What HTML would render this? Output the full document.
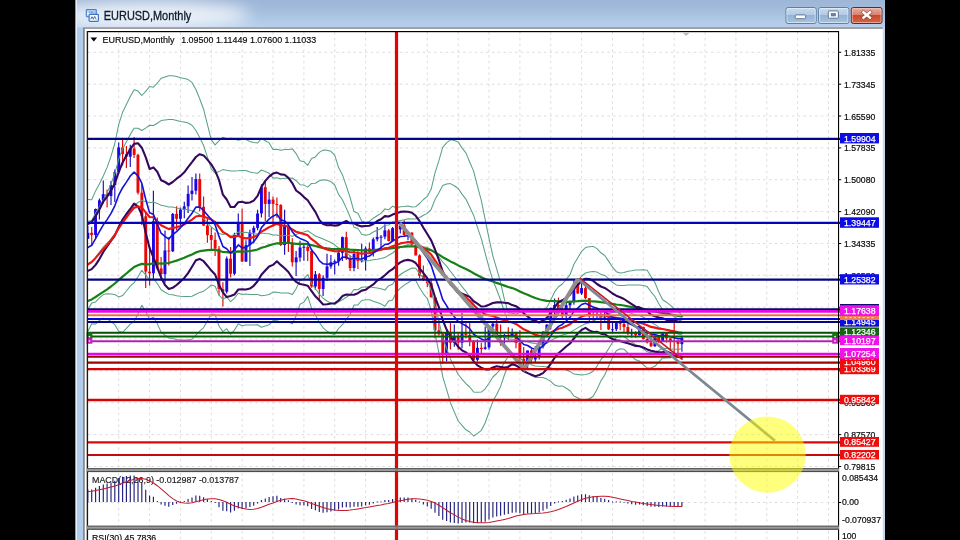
<!DOCTYPE html>
<html lang="en"><head><meta charset="utf-8"><title>EURUSD,Monthly</title>
<style>html,body{margin:0;padding:0;background:#000;width:960px;height:540px;overflow:hidden}</style></head>
<body>
<svg width="960" height="540" viewBox="0 0 960 540" style="position:absolute;left:0;top:0;will-change:transform;font-family:'Liberation Sans',sans-serif">
<defs>
<linearGradient id="tb" x1="0" y1="0" x2="0" y2="1"><stop offset="0" stop-color="#9db5d6"/><stop offset="0.4" stop-color="#a5bedd"/><stop offset="0.62" stop-color="#abc7e3"/><stop offset="1" stop-color="#b9d0ee"/></linearGradient>
<linearGradient id="bt" x1="0" y1="0" x2="0" y2="1"><stop offset="0" stop-color="#c9dbee"/><stop offset="0.45" stop-color="#b4cbe6"/><stop offset="0.5" stop-color="#95b3d6"/><stop offset="1" stop-color="#a7c3e2"/></linearGradient>
<linearGradient id="bc" x1="0" y1="0" x2="0" y2="1"><stop offset="0" stop-color="#eab0a2"/><stop offset="0.45" stop-color="#dc8270"/><stop offset="0.5" stop-color="#c9492c"/><stop offset="1" stop-color="#d4684a"/></linearGradient>
<clipPath id="cm"><rect x="88" y="32" width="750.5" height="437"/></clipPath>
<clipPath id="ct"><rect x="77" y="0" width="808" height="27.4"/></clipPath>
<clipPath id="cmacd"><rect x="88" y="472" width="750.5" height="55"/></clipPath>
<filter id="glow" x="-30%" y="-120%" width="160%" height="340%"><feGaussianBlur stdDeviation="8"/></filter>
<filter id="soft"><feGaussianBlur stdDeviation="0.35"/></filter>
</defs>
<rect x="0" y="0" width="960" height="540" fill="#000"/>
<rect x="75.5" y="0" width="809.5" height="27.5" fill="url(#tb)"/>
<rect x="75.5" y="27" width="809.5" height="513" fill="#b2ccec"/>
<rect x="75.6" y="0" width="1.3" height="540" fill="#eef4fb"/>
<ellipse cx="150" cy="15" rx="100" ry="13" fill="#ffffff" opacity="0.8" filter="url(#glow)" clip-path="url(#ct)"/>
<g>
<rect x="86.3" y="9.5" width="10" height="7.2" rx="0.8" fill="#a9c8ee" stroke="#4a80c8" stroke-width="1.1"/>
<rect x="87.3" y="11.6" width="2.6" height="4" fill="#f4f8fd"/>
<path d="M88.6 12.2h1.6M91.2 12.2h1.4" stroke="#3f6fb4" stroke-width="0.9"/>
<rect x="89.1" y="14.4" width="9.3" height="6.9" rx="0.8" fill="#f8fbfe" stroke="#3d74c4" stroke-width="1.2"/>
<path d="M90.8 19.3l1.2-2.6 1.3 2.5 1.4-2.8 1.5 3.1" fill="none" stroke="#3a557c" stroke-width="0.85"/>
</g>
<text x="103.8" y="20.3" font-size="12.2" fill="#0f1a2c" stroke="#0f1a2c" stroke-width="0.3" textLength="87.5" lengthAdjust="spacingAndGlyphs">EURUSD,Monthly</text>
<rect x="786" y="7.5" width="30.2" height="16" rx="2" fill="url(#bt)" stroke="#5f7fa6" stroke-width="1"/>
<rect x="787" y="8.5" width="28.2" height="14" rx="1.3" fill="none" stroke="#e8f1fa" stroke-width="0.9" opacity="0.75"/>
<rect x="818.6" y="7.5" width="30.3" height="16" rx="2" fill="url(#bt)" stroke="#5f7fa6" stroke-width="1"/>
<rect x="819.6" y="8.5" width="28.3" height="14" rx="1.3" fill="none" stroke="#e8f1fa" stroke-width="0.9" opacity="0.75"/>
<rect x="851.3" y="7.5" width="30.7" height="16" rx="2" fill="url(#bc)" stroke="#5e2a24" stroke-width="1"/>
<rect x="852.3" y="8.5" width="28.7" height="14" rx="1.3" fill="none" stroke="#f3c7bd" stroke-width="0.9" opacity="0.75"/>
<rect x="795.2" y="14.9" width="10.4" height="3.8" rx="1" fill="#fbfdff" stroke="#586b85" stroke-width="0.9"/>
<rect x="828.3" y="10.9" width="10" height="7.3" rx="0.8" fill="#fbfdff" stroke="#586b85" stroke-width="0.9"/>
<rect x="831.2" y="13.4" width="4.3" height="2.6" fill="#6f86a6" stroke="#55677f" stroke-width="0.6"/>
<path d="M863.4 12.3l6.6 5.4M870 12.3l-6.6 5.4" stroke="#5e3430" stroke-width="3.8" stroke-linecap="square" opacity="0.6"/>
<path d="M863.4 12.3l6.6 5.4M870 12.3l-6.6 5.4" stroke="#ffffff" stroke-width="2.4" stroke-linecap="square"/>
<rect x="83" y="27.4" width="800" height="513" fill="#8a8a8a"/>
<rect x="84.8" y="28.8" width="798.2" height="512" fill="#ffffff"/>
<g stroke="#d9d9d9" stroke-width="0.9" stroke-dasharray="2.6 3.17" fill="none">
<path d="M828.5 32V468"/>
<path d="M828.5 473V526"/>
<path d="M828.5 531V540"/>
<path d="M797.6 32V468"/>
<path d="M797.6 473V526"/>
<path d="M797.6 531V540"/>
<path d="M766.8 32V468"/>
<path d="M766.8 473V526"/>
<path d="M766.8 531V540"/>
<path d="M735.9 32V468"/>
<path d="M735.9 473V526"/>
<path d="M735.9 531V540"/>
<path d="M705.1 32V468"/>
<path d="M705.1 473V526"/>
<path d="M705.1 531V540"/>
<path d="M674.2 32V468"/>
<path d="M674.2 473V526"/>
<path d="M674.2 531V540"/>
<path d="M643.3 32V468"/>
<path d="M643.3 473V526"/>
<path d="M643.3 531V540"/>
<path d="M612.5 32V468"/>
<path d="M612.5 473V526"/>
<path d="M612.5 531V540"/>
<path d="M581.6 32V468"/>
<path d="M581.6 473V526"/>
<path d="M581.6 531V540"/>
<path d="M550.8 32V468"/>
<path d="M550.8 473V526"/>
<path d="M550.8 531V540"/>
<path d="M519.9 32V468"/>
<path d="M519.9 473V526"/>
<path d="M519.9 531V540"/>
<path d="M489 32V468"/>
<path d="M489 473V526"/>
<path d="M489 531V540"/>
<path d="M458.2 32V468"/>
<path d="M458.2 473V526"/>
<path d="M458.2 531V540"/>
<path d="M427.3 32V468"/>
<path d="M427.3 473V526"/>
<path d="M427.3 531V540"/>
<path d="M396.5 32V468"/>
<path d="M396.5 473V526"/>
<path d="M396.5 531V540"/>
<path d="M365.6 32V468"/>
<path d="M365.6 473V526"/>
<path d="M365.6 531V540"/>
<path d="M334.7 32V468"/>
<path d="M334.7 473V526"/>
<path d="M334.7 531V540"/>
<path d="M303.9 32V468"/>
<path d="M303.9 473V526"/>
<path d="M303.9 531V540"/>
<path d="M273 32V468"/>
<path d="M273 473V526"/>
<path d="M273 531V540"/>
<path d="M242.2 32V468"/>
<path d="M242.2 473V526"/>
<path d="M242.2 531V540"/>
<path d="M211.3 32V468"/>
<path d="M211.3 473V526"/>
<path d="M211.3 531V540"/>
<path d="M180.4 32V468"/>
<path d="M180.4 473V526"/>
<path d="M180.4 531V540"/>
<path d="M149.6 32V468"/>
<path d="M149.6 473V526"/>
<path d="M149.6 531V540"/>
<path d="M118.7 32V468"/>
<path d="M118.7 473V526"/>
<path d="M118.7 531V540"/>
<path d="M88 52.3H838"/>
<path d="M88 84.2H838"/>
<path d="M88 116H838"/>
<path d="M88 147.9H838"/>
<path d="M88 179.7H838"/>
<path d="M88 211.6H838"/>
<path d="M88 243.5H838"/>
<path d="M88 275.3H838"/>
<path d="M88 307.2H838"/>
<path d="M88 339H838"/>
<path d="M88 370.9H838"/>
<path d="M88 402.8H838"/>
<path d="M88 434.6H838"/>
<path d="M88 466.5H838"/>
<path d="M88 502.5H838"/>
</g>
<g clip-path="url(#cm)">
<path d="M87.8 226V239.1" stroke="#1a0cc0" stroke-width="1.15"/>
<rect x="86.4" y="232.8" width="2.9" height="5.9" fill="#1c06e6"/>
<path d="M91.7 226.9V246" stroke="#dc0808" stroke-width="1.15"/>
<rect x="90.2" y="232.8" width="2.9" height="2.2" fill="#ec0606"/>
<path d="M95.6 208.6V238.3" stroke="#1a0cc0" stroke-width="1.15"/>
<rect x="94.1" y="209" width="2.9" height="26" fill="#1c06e6"/>
<path d="M99.4 198.4V219.6" stroke="#1a0cc0" stroke-width="1.15"/>
<rect x="98" y="200.3" width="2.9" height="8.7" fill="#1c06e6"/>
<path d="M103.3 180.6V203.5" stroke="#1a0cc0" stroke-width="1.15"/>
<rect x="101.8" y="194.2" width="2.9" height="6.1" fill="#1c06e6"/>
<path d="M107.1 189.5V207.4" stroke="#dc0808" stroke-width="1.15"/>
<rect x="105.7" y="194.2" width="2.9" height="1.8" fill="#ec0606"/>
<path d="M111 181.1V205.1" stroke="#1a0cc0" stroke-width="1.15"/>
<rect x="109.5" y="185" width="2.9" height="11" fill="#1c06e6"/>
<path d="M114.8 169.5V202.1" stroke="#1a0cc0" stroke-width="1.15"/>
<rect x="113.4" y="172" width="2.9" height="13" fill="#1c06e6"/>
<path d="M118.7 142.5V173.6" stroke="#1a0cc0" stroke-width="1.15"/>
<rect x="117.2" y="147.4" width="2.9" height="24.6" fill="#1c06e6"/>
<path d="M122.6 137.8V165.5" stroke="#dc0808" stroke-width="1.15"/>
<rect x="121.1" y="147.4" width="2.9" height="6.7" fill="#ec0606"/>
<path d="M126.4 145.9V167.9" stroke="#dc0808" stroke-width="1.15"/>
<rect x="125" y="154.1" width="2.9" height="2.6" fill="#ec0606"/>
<path d="M130.3 144.7V167.1" stroke="#1a0cc0" stroke-width="1.15"/>
<rect x="128.8" y="148.6" width="2.9" height="8.1" fill="#1c06e6"/>
<path d="M134.1 137.1V157.9" stroke="#dc0808" stroke-width="1.15"/>
<rect x="132.7" y="148.6" width="2.9" height="6.3" fill="#ec0606"/>
<path d="M138 153.7V194.4" stroke="#dc0808" stroke-width="1.15"/>
<rect x="136.5" y="154.9" width="2.9" height="37.8" fill="#ec0606"/>
<path d="M141.8 184.6V224.9" stroke="#dc0808" stroke-width="1.15"/>
<rect x="140.4" y="192.7" width="2.9" height="23.6" fill="#ec0606"/>
<path d="M145.7 212.7V287.9" stroke="#dc0808" stroke-width="1.15"/>
<rect x="144.3" y="216.3" width="2.9" height="55.3" fill="#ec0606"/>
<path d="M149.6 248.5V285.5" stroke="#dc0808" stroke-width="1.15"/>
<rect x="148.1" y="271.7" width="2.9" height="1.6" fill="#ec0606"/>
<path d="M153.4 190.7V279" stroke="#1a0cc0" stroke-width="1.15"/>
<rect x="152" y="221.2" width="2.9" height="52.1" fill="#1c06e6"/>
<path d="M157.3 217.5V270.2" stroke="#dc0808" stroke-width="1.15"/>
<rect x="155.8" y="221.2" width="2.9" height="47.2" fill="#ec0606"/>
<path d="M161.1 257V280.4" stroke="#dc0808" stroke-width="1.15"/>
<rect x="159.7" y="268.4" width="2.9" height="5.7" fill="#ec0606"/>
<path d="M165 230.6V282.8" stroke="#1a0cc0" stroke-width="1.15"/>
<rect x="163.5" y="250.5" width="2.9" height="23.6" fill="#1c06e6"/>
<path d="M168.8 236.9V265.4" stroke="#dc0808" stroke-width="1.15"/>
<rect x="167.4" y="250.5" width="2.9" height="1" fill="#ec0606"/>
<path d="M172.7 213.1V252.1" stroke="#1a0cc0" stroke-width="1.15"/>
<rect x="171.3" y="213.9" width="2.9" height="37.4" fill="#1c06e6"/>
<path d="M176.6 206.2V230.2" stroke="#dc0808" stroke-width="1.15"/>
<rect x="175.1" y="213.9" width="2.9" height="4.9" fill="#ec0606"/>
<path d="M180.4 207.6V226.9" stroke="#1a0cc0" stroke-width="1.15"/>
<rect x="179" y="209.6" width="2.9" height="9.2" fill="#1c06e6"/>
<path d="M184.3 201.7V218.2" stroke="#1a0cc0" stroke-width="1.15"/>
<rect x="182.8" y="206.4" width="2.9" height="3.3" fill="#1c06e6"/>
<path d="M188.1 185.6V212.9" stroke="#1a0cc0" stroke-width="1.15"/>
<rect x="186.7" y="193.9" width="2.9" height="12.4" fill="#1c06e6"/>
<path d="M192 176.9V200.5" stroke="#1a0cc0" stroke-width="1.15"/>
<rect x="190.5" y="190.7" width="2.9" height="3.3" fill="#1c06e6"/>
<path d="M195.9 173.4V194.6" stroke="#1a0cc0" stroke-width="1.15"/>
<rect x="194.4" y="179.1" width="2.9" height="11.6" fill="#1c06e6"/>
<path d="M199.7 173.6V211.2" stroke="#dc0808" stroke-width="1.15"/>
<rect x="198.3" y="179.1" width="2.9" height="27.7" fill="#ec0606"/>
<path d="M203.6 196.4V226.1" stroke="#dc0808" stroke-width="1.15"/>
<rect x="202.1" y="206.8" width="2.9" height="18.7" fill="#ec0606"/>
<path d="M207.4 218.8V242.8" stroke="#dc0808" stroke-width="1.15"/>
<rect x="206" y="225.5" width="2.9" height="9.6" fill="#ec0606"/>
<path d="M211.3 227.3V249.9" stroke="#dc0808" stroke-width="1.15"/>
<rect x="209.8" y="235" width="2.9" height="4.9" fill="#ec0606"/>
<path d="M215.1 232.6V256" stroke="#dc0808" stroke-width="1.15"/>
<rect x="213.7" y="239.9" width="2.9" height="8.7" fill="#ec0606"/>
<path d="M219 246V295.5" stroke="#dc0808" stroke-width="1.15"/>
<rect x="217.5" y="248.7" width="2.9" height="40.3" fill="#ec0606"/>
<path d="M222.9 282.2V306.4" stroke="#dc0808" stroke-width="1.15"/>
<rect x="221.4" y="289" width="2.9" height="2.8" fill="#ec0606"/>
<path d="M226.7 256.4V293.6" stroke="#1a0cc0" stroke-width="1.15"/>
<rect x="225.3" y="258.6" width="2.9" height="33.2" fill="#1c06e6"/>
<path d="M230.6 247V277.6" stroke="#dc0808" stroke-width="1.15"/>
<rect x="229.1" y="258.6" width="2.9" height="15.1" fill="#ec0606"/>
<path d="M234.4 232.8V275.3" stroke="#1a0cc0" stroke-width="1.15"/>
<rect x="233" y="235" width="2.9" height="38.7" fill="#1c06e6"/>
<path d="M238.3 213.5V234.8" stroke="#1a0cc0" stroke-width="1.15"/>
<rect x="236.8" y="222.2" width="2.9" height="12.8" fill="#1c06e6"/>
<path d="M242.1 208.5V262.1" stroke="#dc0808" stroke-width="1.15"/>
<rect x="240.7" y="222.2" width="2.9" height="39.3" fill="#ec0606"/>
<path d="M246 240.3V261.9" stroke="#1a0cc0" stroke-width="1.15"/>
<rect x="244.5" y="245.2" width="2.9" height="16.3" fill="#1c06e6"/>
<path d="M249.9 229.8V266" stroke="#1a0cc0" stroke-width="1.15"/>
<rect x="248.4" y="232.6" width="2.9" height="12.6" fill="#1c06e6"/>
<path d="M253.7 225.7V243.4" stroke="#1a0cc0" stroke-width="1.15"/>
<rect x="252.3" y="227.9" width="2.9" height="4.7" fill="#1c06e6"/>
<path d="M257.6 209.8V230.2" stroke="#1a0cc0" stroke-width="1.15"/>
<rect x="256.1" y="213.5" width="2.9" height="14.4" fill="#1c06e6"/>
<path d="M261.4 184.2V217.5" stroke="#1a0cc0" stroke-width="1.15"/>
<rect x="260" y="187.2" width="2.9" height="26.2" fill="#1c06e6"/>
<path d="M265.3 181.7V221.2" stroke="#dc0808" stroke-width="1.15"/>
<rect x="263.8" y="187.2" width="2.9" height="16.7" fill="#ec0606"/>
<path d="M269.1 191.7V217.1" stroke="#1a0cc0" stroke-width="1.15"/>
<rect x="267.7" y="199.6" width="2.9" height="4.3" fill="#1c06e6"/>
<path d="M273 196.4V226.7" stroke="#dc0808" stroke-width="1.15"/>
<rect x="271.6" y="199.6" width="2.9" height="4.3" fill="#ec0606"/>
<path d="M276.9 197.6V217.8" stroke="#dc0808" stroke-width="1.15"/>
<rect x="275.4" y="203.9" width="2.9" height="1" fill="#ec0606"/>
<path d="M280.7 204.3V246" stroke="#dc0808" stroke-width="1.15"/>
<rect x="279.3" y="204.9" width="2.9" height="40.1" fill="#ec0606"/>
<path d="M284.6 209.8V254.8" stroke="#1a0cc0" stroke-width="1.15"/>
<rect x="283.1" y="225.9" width="2.9" height="19.1" fill="#1c06e6"/>
<path d="M288.4 225.3V252.1" stroke="#dc0808" stroke-width="1.15"/>
<rect x="287" y="225.9" width="2.9" height="16.7" fill="#ec0606"/>
<path d="M292.3 238.3V266.4" stroke="#dc0808" stroke-width="1.15"/>
<rect x="290.8" y="242.6" width="2.9" height="19.7" fill="#ec0606"/>
<path d="M296.1 251.1V275.9" stroke="#1a0cc0" stroke-width="1.15"/>
<rect x="294.7" y="257.4" width="2.9" height="4.9" fill="#1c06e6"/>
<path d="M300 240.7V261.7" stroke="#1a0cc0" stroke-width="1.15"/>
<rect x="298.6" y="247.5" width="2.9" height="10" fill="#1c06e6"/>
<path d="M303.9 245V260.7" stroke="#1a0cc0" stroke-width="1.15"/>
<rect x="302.4" y="246.8" width="2.9" height="1" fill="#1c06e6"/>
<path d="M307.7 245.2V260.9" stroke="#dc0808" stroke-width="1.15"/>
<rect x="306.3" y="246.8" width="2.9" height="4.1" fill="#ec0606"/>
<path d="M311.6 249.1V287.7" stroke="#dc0808" stroke-width="1.15"/>
<rect x="310.1" y="250.9" width="2.9" height="35.6" fill="#ec0606"/>
<path d="M315.4 270.9V289.8" stroke="#1a0cc0" stroke-width="1.15"/>
<rect x="314" y="274.3" width="2.9" height="12.2" fill="#1c06e6"/>
<path d="M319.3 273.1V299.7" stroke="#dc0808" stroke-width="1.15"/>
<rect x="317.8" y="274.3" width="2.9" height="14.6" fill="#ec0606"/>
<path d="M323.1 275.3V296.1" stroke="#1a0cc0" stroke-width="1.15"/>
<rect x="321.7" y="277.8" width="2.9" height="11.2" fill="#1c06e6"/>
<path d="M327 253.8V281" stroke="#1a0cc0" stroke-width="1.15"/>
<rect x="325.6" y="266.4" width="2.9" height="11.4" fill="#1c06e6"/>
<path d="M330.9 255V268.8" stroke="#1a0cc0" stroke-width="1.15"/>
<rect x="329.4" y="262.3" width="2.9" height="4.1" fill="#1c06e6"/>
<path d="M334.7 259.5V274.5" stroke="#1a0cc0" stroke-width="1.15"/>
<rect x="333.3" y="261.3" width="2.9" height="1" fill="#1c06e6"/>
<path d="M338.6 248.1V265.8" stroke="#1a0cc0" stroke-width="1.15"/>
<rect x="337.1" y="252.7" width="2.9" height="8.5" fill="#1c06e6"/>
<path d="M342.4 236.5V260.9" stroke="#1a0cc0" stroke-width="1.15"/>
<rect x="341" y="237.1" width="2.9" height="15.7" fill="#1c06e6"/>
<path d="M346.3 231.8V260.1" stroke="#dc0808" stroke-width="1.15"/>
<rect x="344.8" y="237.1" width="2.9" height="21.4" fill="#ec0606"/>
<path d="M350.1 255.2V270.9" stroke="#dc0808" stroke-width="1.15"/>
<rect x="348.7" y="258.4" width="2.9" height="9.6" fill="#ec0606"/>
<path d="M354 250.7V271.3" stroke="#1a0cc0" stroke-width="1.15"/>
<rect x="352.6" y="254" width="2.9" height="14" fill="#1c06e6"/>
<path d="M357.9 250.7V269" stroke="#dc0808" stroke-width="1.15"/>
<rect x="356.4" y="254" width="2.9" height="6.9" fill="#ec0606"/>
<path d="M361.7 243.8V262.5" stroke="#1a0cc0" stroke-width="1.15"/>
<rect x="360.3" y="260.3" width="2.9" height="1" fill="#1c06e6"/>
<path d="M365.6 246.6V270.6" stroke="#1a0cc0" stroke-width="1.15"/>
<rect x="364.1" y="248.5" width="2.9" height="11.8" fill="#1c06e6"/>
<path d="M369.4 242.4V253.6" stroke="#dc0808" stroke-width="1.15"/>
<rect x="368" y="248.5" width="2.9" height="3.3" fill="#ec0606"/>
<path d="M373.3 237.5V256.4" stroke="#1a0cc0" stroke-width="1.15"/>
<rect x="371.8" y="239.3" width="2.9" height="12.4" fill="#1c06e6"/>
<path d="M377.2 226.9V241.6" stroke="#1a0cc0" stroke-width="1.15"/>
<rect x="375.7" y="236.9" width="2.9" height="2.4" fill="#1c06e6"/>
<path d="M381 235V248.7" stroke="#1a0cc0" stroke-width="1.15"/>
<rect x="379.6" y="236.7" width="2.9" height="1" fill="#1c06e6"/>
<path d="M384.9 224.3V239.3" stroke="#1a0cc0" stroke-width="1.15"/>
<rect x="383.4" y="230.4" width="2.9" height="6.3" fill="#1c06e6"/>
<path d="M388.7 229.1V241.4" stroke="#dc0808" stroke-width="1.15"/>
<rect x="387.3" y="230.4" width="2.9" height="10.6" fill="#ec0606"/>
<path d="M392.6 227.1V241.4" stroke="#1a0cc0" stroke-width="1.15"/>
<rect x="391.1" y="228.1" width="2.9" height="12.8" fill="#1c06e6"/>
<path d="M396.4 221.4V232" stroke="#dc0808" stroke-width="1.15"/>
<rect x="395" y="228.1" width="2.9" height="1.2" fill="#ec0606"/>
<path d="M400.3 223.9V233.4" stroke="#1a0cc0" stroke-width="1.15"/>
<rect x="398.8" y="225.5" width="2.9" height="3.9" fill="#1c06e6"/>
<path d="M404.2 220.3V236.9" stroke="#dc0808" stroke-width="1.15"/>
<rect x="402.7" y="225.5" width="2.9" height="9.4" fill="#ec0606"/>
<path d="M408 232.2V240.3" stroke="#1a0cc0" stroke-width="1.15"/>
<rect x="406.6" y="232.6" width="2.9" height="2.2" fill="#1c06e6"/>
<path d="M411.9 232.2V245.8" stroke="#dc0808" stroke-width="1.15"/>
<rect x="410.4" y="232.6" width="2.9" height="12.2" fill="#ec0606"/>
<path d="M415.7 242.6V255.4" stroke="#dc0808" stroke-width="1.15"/>
<rect x="414.3" y="244.8" width="2.9" height="10.6" fill="#ec0606"/>
<path d="M419.6 254.2V278.2" stroke="#dc0808" stroke-width="1.15"/>
<rect x="418.1" y="255.4" width="2.9" height="20.3" fill="#ec0606"/>
<path d="M423.4 265.4V281" stroke="#dc0808" stroke-width="1.15"/>
<rect x="422" y="275.7" width="2.9" height="4.3" fill="#ec0606"/>
<path d="M427.3 277V286.9" stroke="#dc0808" stroke-width="1.15"/>
<rect x="425.9" y="280" width="2.9" height="3.1" fill="#ec0606"/>
<path d="M431.2 278.2V297.5" stroke="#dc0808" stroke-width="1.15"/>
<rect x="429.7" y="283.1" width="2.9" height="14.2" fill="#ec0606"/>
<path d="M435 296.9V338.2" stroke="#dc0808" stroke-width="1.15"/>
<rect x="433.6" y="297.3" width="2.9" height="33" fill="#ec0606"/>
<path d="M438.9 320.3V335.5" stroke="#dc0808" stroke-width="1.15"/>
<rect x="437.4" y="330.3" width="2.9" height="3.9" fill="#ec0606"/>
<path d="M442.7 332.3V364" stroke="#dc0808" stroke-width="1.15"/>
<rect x="441.3" y="334.1" width="2.9" height="18.9" fill="#ec0606"/>
<path d="M446.6 331.3V361.6" stroke="#1a0cc0" stroke-width="1.15"/>
<rect x="445.1" y="332.9" width="2.9" height="20.1" fill="#1c06e6"/>
<path d="M450.4 323.1V349.4" stroke="#dc0808" stroke-width="1.15"/>
<rect x="449" y="332.9" width="2.9" height="9.8" fill="#ec0606"/>
<path d="M454.3 324.4V346.7" stroke="#1a0cc0" stroke-width="1.15"/>
<rect x="452.9" y="336.2" width="2.9" height="6.5" fill="#1c06e6"/>
<path d="M458.2 333.3V349.8" stroke="#dc0808" stroke-width="1.15"/>
<rect x="456.7" y="336.2" width="2.9" height="6.5" fill="#ec0606"/>
<path d="M462 313V348.2" stroke="#1a0cc0" stroke-width="1.15"/>
<rect x="460.6" y="333.5" width="2.9" height="9.2" fill="#1c06e6"/>
<path d="M465.9 323.3V338.6" stroke="#dc0808" stroke-width="1.15"/>
<rect x="464.4" y="333.5" width="2.9" height="1.4" fill="#ec0606"/>
<path d="M469.7 321.9V346.3" stroke="#dc0808" stroke-width="1.15"/>
<rect x="468.3" y="334.9" width="2.9" height="6.9" fill="#ec0606"/>
<path d="M473.6 340V360.2" stroke="#dc0808" stroke-width="1.15"/>
<rect x="472.1" y="341.9" width="2.9" height="17.9" fill="#ec0606"/>
<path d="M477.4 339.6V361.6" stroke="#1a0cc0" stroke-width="1.15"/>
<rect x="476" y="347.8" width="2.9" height="12" fill="#1c06e6"/>
<path d="M481.3 342.7V353.9" stroke="#dc0808" stroke-width="1.15"/>
<rect x="479.9" y="347.8" width="2.9" height="1.2" fill="#ec0606"/>
<path d="M485.2 326.8V349.8" stroke="#1a0cc0" stroke-width="1.15"/>
<rect x="483.7" y="347.3" width="2.9" height="1.6" fill="#1c06e6"/>
<path d="M489 325.4V349.4" stroke="#1a0cc0" stroke-width="1.15"/>
<rect x="487.6" y="326.6" width="2.9" height="20.8" fill="#1c06e6"/>
<path d="M492.9 323.1V333.3" stroke="#1a0cc0" stroke-width="1.15"/>
<rect x="491.4" y="323.7" width="2.9" height="2.8" fill="#1c06e6"/>
<path d="M496.7 317V338" stroke="#dc0808" stroke-width="1.15"/>
<rect x="495.3" y="323.7" width="2.9" height="13" fill="#ec0606"/>
<path d="M500.6 324.6V345.7" stroke="#dc0808" stroke-width="1.15"/>
<rect x="499.1" y="336.8" width="2.9" height="1" fill="#ec0606"/>
<path d="M504.4 333.9V344.1" stroke="#1a0cc0" stroke-width="1.15"/>
<rect x="503" y="334.9" width="2.9" height="2.8" fill="#1c06e6"/>
<path d="M508.3 327.2V340.2" stroke="#dc0808" stroke-width="1.15"/>
<rect x="506.9" y="334.9" width="2.9" height="1" fill="#ec0606"/>
<path d="M512.2 328.6V337.2" stroke="#1a0cc0" stroke-width="1.15"/>
<rect x="510.7" y="332.3" width="2.9" height="3.5" fill="#1c06e6"/>
<path d="M516 331.9V348.2" stroke="#dc0808" stroke-width="1.15"/>
<rect x="514.6" y="332.3" width="2.9" height="10.6" fill="#ec0606"/>
<path d="M519.9 329.9V361.6" stroke="#dc0808" stroke-width="1.15"/>
<rect x="518.4" y="342.9" width="2.9" height="15.9" fill="#ec0606"/>
<path d="M523.7 347.1V368.5" stroke="#dc0808" stroke-width="1.15"/>
<rect x="522.3" y="358.7" width="2.9" height="3.1" fill="#ec0606"/>
<path d="M527.6 351.2V368.9" stroke="#1a0cc0" stroke-width="1.15"/>
<rect x="526.1" y="350.4" width="2.9" height="11.4" fill="#1c06e6"/>
<path d="M531.5 349V362.6" stroke="#dc0808" stroke-width="1.15"/>
<rect x="530" y="350.4" width="2.9" height="9" fill="#ec0606"/>
<path d="M535.3 345.9V362.6" stroke="#1a0cc0" stroke-width="1.15"/>
<rect x="533.9" y="356.3" width="2.9" height="3.1" fill="#1c06e6"/>
<path d="M539.2 344.1V359.6" stroke="#1a0cc0" stroke-width="1.15"/>
<rect x="537.7" y="346.3" width="2.9" height="10" fill="#1c06e6"/>
<path d="M543 331.1V348.6" stroke="#1a0cc0" stroke-width="1.15"/>
<rect x="541.6" y="332.3" width="2.9" height="14" fill="#1c06e6"/>
<path d="M546.9 324V337.2" stroke="#1a0cc0" stroke-width="1.15"/>
<rect x="545.4" y="324.8" width="2.9" height="7.5" fill="#1c06e6"/>
<path d="M550.7 307.7V329.4" stroke="#1a0cc0" stroke-width="1.15"/>
<rect x="549.3" y="307.9" width="2.9" height="16.9" fill="#1c06e6"/>
<path d="M554.6 298.5V315.2" stroke="#1a0cc0" stroke-width="1.15"/>
<rect x="553.1" y="305" width="2.9" height="2.8" fill="#1c06e6"/>
<path d="M558.5 297.6V313" stroke="#dc0808" stroke-width="1.15"/>
<rect x="557" y="305" width="2.9" height="3.9" fill="#ec0606"/>
<path d="M562.3 306.3V318.7" stroke="#dc0808" stroke-width="1.15"/>
<rect x="560.9" y="308.9" width="2.9" height="6.9" fill="#ec0606"/>
<path d="M566.2 303V319.5" stroke="#1a0cc0" stroke-width="1.15"/>
<rect x="564.7" y="305.2" width="2.9" height="10.6" fill="#1c06e6"/>
<path d="M570 300.4V312.8" stroke="#1a0cc0" stroke-width="1.15"/>
<rect x="568.6" y="301.4" width="2.9" height="3.9" fill="#1c06e6"/>
<path d="M573.9 279.5V304.8" stroke="#1a0cc0" stroke-width="1.15"/>
<rect x="572.4" y="284.5" width="2.9" height="16.9" fill="#1c06e6"/>
<path d="M577.7 278.8V293.8" stroke="#dc0808" stroke-width="1.15"/>
<rect x="576.3" y="284.5" width="2.9" height="9" fill="#ec0606"/>
<path d="M581.6 282V295.1" stroke="#1a0cc0" stroke-width="1.15"/>
<rect x="580.1" y="288.1" width="2.9" height="5.3" fill="#1c06e6"/>
<path d="M585.5 284.5V299.1" stroke="#dc0808" stroke-width="1.15"/>
<rect x="584" y="288.1" width="2.9" height="10" fill="#ec0606"/>
<path d="M589.3 297.9V321.3" stroke="#dc0808" stroke-width="1.15"/>
<rect x="587.9" y="298.1" width="2.9" height="15.9" fill="#ec0606"/>
<path d="M593.2 307.5V321.3" stroke="#dc0808" stroke-width="1.15"/>
<rect x="591.7" y="314" width="2.9" height="1" fill="#ec0606"/>
<path d="M597 309.9V318.7" stroke="#1a0cc0" stroke-width="1.15"/>
<rect x="595.6" y="314" width="2.9" height="1" fill="#1c06e6"/>
<path d="M600.9 312.2V329.9" stroke="#dc0808" stroke-width="1.15"/>
<rect x="599.4" y="314" width="2.9" height="3.7" fill="#ec0606"/>
<path d="M604.7 308.9V320.7" stroke="#1a0cc0" stroke-width="1.15"/>
<rect x="603.3" y="317.4" width="2.9" height="1" fill="#1c06e6"/>
<path d="M608.6 316.6V329.9" stroke="#dc0808" stroke-width="1.15"/>
<rect x="607.2" y="317.4" width="2.9" height="12" fill="#ec0606"/>
<path d="M612.5 321.7V333.3" stroke="#1a0cc0" stroke-width="1.15"/>
<rect x="611" y="329.2" width="2.9" height="1" fill="#1c06e6"/>
<path d="M616.3 322.3V331.1" stroke="#1a0cc0" stroke-width="1.15"/>
<rect x="614.9" y="323.1" width="2.9" height="6.1" fill="#1c06e6"/>
<path d="M620.2 318.9V330.3" stroke="#dc0808" stroke-width="1.15"/>
<rect x="618.7" y="323.1" width="2.9" height="1" fill="#ec0606"/>
<path d="M624 322.1V332.5" stroke="#dc0808" stroke-width="1.15"/>
<rect x="622.6" y="324" width="2.9" height="3.1" fill="#ec0606"/>
<path d="M627.9 323.7V334.9" stroke="#dc0808" stroke-width="1.15"/>
<rect x="626.4" y="327" width="2.9" height="6.3" fill="#ec0606"/>
<path d="M631.7 328.8V337.6" stroke="#1a0cc0" stroke-width="1.15"/>
<rect x="630.3" y="333.3" width="2.9" height="1" fill="#1c06e6"/>
<path d="M635.6 331.3V337.8" stroke="#dc0808" stroke-width="1.15"/>
<rect x="634.2" y="333.3" width="2.9" height="1.8" fill="#ec0606"/>
<path d="M639.5 325.4V335.5" stroke="#1a0cc0" stroke-width="1.15"/>
<rect x="638" y="327" width="2.9" height="8.1" fill="#1c06e6"/>
<path d="M643.3 326.8V339.6" stroke="#dc0808" stroke-width="1.15"/>
<rect x="641.9" y="327" width="2.9" height="12" fill="#ec0606"/>
<path d="M647.2 331.9V343.5" stroke="#dc0808" stroke-width="1.15"/>
<rect x="645.7" y="339" width="2.9" height="3.5" fill="#ec0606"/>
<path d="M651 337.6V346.9" stroke="#dc0808" stroke-width="1.15"/>
<rect x="649.6" y="342.5" width="2.9" height="3.7" fill="#ec0606"/>
<path d="M654.9 334.7V346.9" stroke="#1a0cc0" stroke-width="1.15"/>
<rect x="653.4" y="336" width="2.9" height="10.2" fill="#1c06e6"/>
<path d="M658.8 334.9V342.9" stroke="#dc0808" stroke-width="1.15"/>
<rect x="657.3" y="336" width="2.9" height="5.5" fill="#ec0606"/>
<path d="M662.6 332.3V342.1" stroke="#1a0cc0" stroke-width="1.15"/>
<rect x="661.2" y="333.5" width="2.9" height="7.9" fill="#1c06e6"/>
<path d="M666.5 332.9V342.5" stroke="#dc0808" stroke-width="1.15"/>
<rect x="665" y="333.5" width="2.9" height="4.9" fill="#ec0606"/>
<path d="M670.3 338.2V351" stroke="#dc0808" stroke-width="1.15"/>
<rect x="668.9" y="338.4" width="2.9" height="2.6" fill="#ec0606"/>
<path d="M674.2 321.9V356.9" stroke="#dc0808" stroke-width="1.15"/>
<rect x="672.7" y="341" width="2.9" height="1" fill="#ec0606"/>
<path d="M678 340.4V353.2" stroke="#dc0808" stroke-width="1.15"/>
<rect x="676.6" y="340.8" width="2.9" height="3.1" fill="#ec0606"/>
<path d="M681.9 336.2V351.8" stroke="#1a0cc0" stroke-width="1.15"/>
<rect x="680.4" y="337.9" width="2.9" height="6.2" fill="#1c06e6"/>
<polyline points="84,201.2 87.8,199.4 91.7,199.7 95.6,190.9 99.4,184 103.3,176 107.1,167.4 111,156.4 114.8,143.5 118.7,124.6 122.6,112.2 126.4,104.5 130.3,96.5 134.1,89.7 138,91.1 141.8,95.5 145.7,91.4 149.6,86.5 153.4,87.2 157.3,83.2 161.1,78.3 165,76.9 168.8,75.7 172.7,75.8 176.6,76.6 180.4,77.8 184.3,78.6 188.1,79.6 192,82.4 195.9,89.5 199.7,98.7 203.6,109.2 207.4,124.3 211.3,139.9 215.1,144.9 219,140.8 222.9,137.2 226.7,138.7 230.6,138.2 234.4,139.1 238.3,140.2 242.1,139.5 246,139.6 249.9,141.5 253.7,142.4 257.6,143 261.4,138.6 265.3,140.8 269.1,142.9 273,149.6 276.9,149.2 280.7,150.2 284.6,149.5 288.4,149.6 292.3,148.9 296.1,153.6 300,160.8 303.9,161.7 307.7,165.3 311.6,158.4 315.4,156.9 319.3,152.4 323.1,150.1 327,150.2 330.9,151.3 334.7,155.1 338.6,167.6 342.4,174.7 346.3,185.9 350.1,197.5 354,211.6 357.9,213.3 361.7,221.1 365.6,222.4 369.4,221.4 373.3,218.2 377.2,215.7 381,213.4 384.9,208.9 388.7,209.8 392.6,206.2 396.4,207.8 400.3,206.8 404.2,206.6 408,206 411.9,206.9 415.7,206.7 419.6,203.5 423.4,199.5 427.3,196.4 431.2,189.1 435,172.9 438.9,160.7 442.7,147.4 446.6,142.8 450.4,139.8 454.3,140.5 458.2,142 462,147.9 465.9,152.9 469.7,162 473.6,171.1 477.4,185.8 481.3,200.3 485.2,219.6 489,238.3 492.9,256.1 496.7,268.9 500.6,282.7 504.4,299.3 508.3,312.9 512.2,313.3 516,313.9 519.9,312.6 523.7,311 527.6,310.8 531.5,310.2 535.3,309.7 539.2,311.1 543,310.5 546.9,307.4 550.7,299.9 554.6,291.9 558.5,286.7 562.3,284 566.2,279.5 570,274.7 573.9,264.2 577.7,258 581.6,251.3 585.5,247.6 589.3,246.7 593.2,246.4 597,248.6 600.9,252.8 604.7,255.5 608.6,261.1 612.5,267.2 616.3,271.7 620.2,272.9 624,272.6 627.9,271.3 631.7,270.8 635.6,270 639.5,269.9 643.3,269.7 647.2,270.3 651,276.6 654.9,282.5 658.8,292 662.6,299.8 666.5,302.3 670.3,305.1 674.2,308.6 678,311.2 681.9,315.3" fill="none" stroke="#58a283" stroke-width="1.05" stroke-linejoin="round" stroke-linecap="round" />
<polyline points="84,223.9 87.8,221.4 91.7,220.4 95.6,213.1 99.4,206.7 103.3,199.7 107.1,192.7 111,183.9 114.8,173.7 118.7,159.1 122.6,148.9 126.4,141.8 130.3,134.4 134.1,128.3 138,128.3 141.8,130.5 145.7,128.1 149.6,125.3 153.4,125.5 157.3,123.3 161.1,120.6 165,120 168.8,119.4 172.7,119.6 176.6,120.4 180.4,121.4 184.3,122.1 188.1,123 192,125.2 195.9,130.5 199.7,137.5 203.6,145.6 207.4,157.1 211.3,168.9 215.1,173.2 219,171.6 222.9,169.6 226.7,170.3 230.6,170.9 234.4,170.9 238.3,170.8 242.1,170.5 246,170.5 249.9,172 253.7,172.8 257.6,173.3 261.4,170 265.3,171.6 269.1,173.2 273,178.1 276.9,177.8 280.7,178.8 284.6,178.2 288.4,178.2 292.3,178 296.1,180.7 300,184.7 303.9,185.1 307.7,187.1 311.6,183.4 315.4,183.2 319.3,180.7 323.1,179.7 327,180.3 330.9,181.6 334.7,185 338.6,194.4 342.4,199.7 346.3,208.1 350.1,217 354,227.2 357.9,228.5 361.7,234.3 365.6,235.3 369.4,234.5 373.3,232 377.2,230.2 381,228.5 384.9,225.2 388.7,225 392.6,221.8 396.4,221.9 400.3,220.4 404.2,219.7 408,218.8 411.9,219.1 415.7,219 419.6,217.5 423.4,215.3 427.3,213.4 431.2,209.3 435,199.6 438.9,192.7 442.7,185.6 446.6,183.9 450.4,183.6 454.3,185.7 458.2,188.5 462,194.1 465.9,199.1 469.7,207 473.6,215.2 477.4,227.1 481.3,238.7 485.2,253.4 489,267.3 492.9,280.3 496.7,289.8 500.6,300 504.4,311.9 508.3,321.6 512.2,321.9 516,322.5 519.9,321.7 523.7,321.1 527.6,321.1 531.5,321.1 535.3,321 539.2,322.1 543,321.7 546.9,319.3 550.7,313.5 554.6,307.4 558.5,303.3 562.3,301 566.2,297.6 570,294 573.9,286.2 577.7,281.3 581.6,276 585.5,273 589.3,272.1 593.2,271.4 597,272.1 600.9,274.2 604.7,275.4 608.6,278.7 612.5,282.3 616.3,284.9 620.2,285.6 624,285.4 627.9,284.9 631.7,285.1 635.6,285 639.5,285.1 643.3,285.5 647.2,286.6 651,291.8 654.9,296.5 658.8,303.7 662.6,309.5 666.5,311.6 670.3,313.9 674.2,316.7 678,318.9 681.9,321.9" fill="none" stroke="#58a283" stroke-width="1.05" stroke-linejoin="round" stroke-linecap="round" />
<polyline points="84,269.3 87.8,265.4 91.7,261.8 95.6,257.5 99.4,252.2 103.3,247.1 107.1,243.2 111,239 114.8,234.1 118.7,228 122.6,222.3 126.4,216.4 130.3,210.3 134.1,205.5 138,202.5 141.8,200.4 145.7,201.4 149.6,202.8 153.4,202.1 157.3,203.4 161.1,205.2 165,206.1 168.8,206.9 172.7,207.1 176.6,208 180.4,208.8 184.3,209.3 188.1,209.8 192,210.7 195.9,212.3 199.7,214.9 203.6,218.4 207.4,222.7 211.3,227 215.1,229.8 219,233.4 222.9,234.4 226.7,233.7 230.6,236.3 234.4,234.6 238.3,232 242.1,232.6 246,232.3 249.9,233.2 253.7,233.7 257.6,233.9 261.4,232.9 265.3,233.4 269.1,233.8 273,235.1 276.9,235 280.7,236 284.6,235.5 288.4,235.6 292.3,236.3 296.1,234.7 300,232.5 303.9,231.9 307.7,230.8 311.6,233.4 315.4,236 319.3,237.4 323.1,239 327,240.7 330.9,242.4 334.7,244.8 338.6,248.1 342.4,249.7 346.3,252.7 350.1,255.9 354,258.3 357.9,259.1 361.7,260.8 365.6,261.1 369.4,260.6 373.3,259.7 377.2,259.2 381,258.6 384.9,257.6 388.7,255.3 392.6,253 396.4,250 400.3,247.4 404.2,245.9 408,244.4 411.9,243.5 415.7,243.7 419.6,245.6 423.4,246.7 427.3,247.4 431.2,249.6 435,253.1 438.9,256.8 442.7,262 446.6,266.1 450.4,271.2 454.3,276.2 458.2,281.5 462,286.6 465.9,291.3 469.7,297 473.6,303.6 477.4,309.7 481.3,315.4 485.2,321.1 489,325.2 492.9,328.6 496.7,331.7 500.6,334.6 504.4,337.2 508.3,339.1 512.2,339.2 516,339.6 519.9,339.9 523.7,341.3 527.6,341.7 531.5,342.9 535.3,343.6 539.2,344.2 543,344.1 546.9,343.2 550.7,340.6 554.6,338.5 558.5,336.5 562.3,334.9 566.2,333.9 570,332.7 573.9,330.1 577.7,327.9 581.6,325.6 585.5,323.7 589.3,322.8 593.2,321.3 597,319.1 600.9,316.9 604.7,315.2 608.6,313.7 612.5,312.4 616.3,311.2 620.2,310.8 624,310.9 627.9,312.2 631.7,313.6 635.6,314.9 639.5,315.5 643.3,317.2 647.2,319.2 651,322.3 654.9,324.4 658.8,327.1 662.6,328.9 666.5,330.1 670.3,331.4 674.2,332.8 678,334.1 681.9,335.1" fill="none" stroke="#58a283" stroke-width="1.05" stroke-linejoin="round" stroke-linecap="round" />
<polyline points="84,314.7 87.8,309.4 91.7,303.1 95.6,301.9 99.4,297.8 103.3,294.6 107.1,293.7 111,294 114.8,294.5 118.7,296.9 122.6,295.6 126.4,291 130.3,286.2 134.1,282.7 138,276.8 141.8,270.3 145.7,274.8 149.6,280.2 153.4,278.7 157.3,283.5 161.1,289.8 165,292.2 168.8,294.4 172.7,294.7 176.6,295.7 180.4,296.2 184.3,296.5 188.1,296.6 192,296.2 195.9,294.2 199.7,292.4 203.6,291.2 207.4,288.3 211.3,285 215.1,286.3 219,295.1 222.9,299.2 226.7,297 230.6,301.6 234.4,298.3 238.3,293.2 242.1,294.6 246,294 249.9,294.4 253.7,294.5 257.6,294.4 261.4,295.7 265.3,295.2 269.1,294.5 273,292.1 276.9,292.2 280.7,293.1 284.6,292.9 288.4,293 292.3,294.6 296.1,288.8 300,280.4 303.9,278.7 307.7,274.5 311.6,283.4 315.4,288.7 319.3,294 323.1,298.2 327,301 330.9,303.1 334.7,304.5 338.6,301.7 342.4,299.7 346.3,297.2 350.1,294.7 354,289.5 357.9,289.7 361.7,287.3 365.6,286.9 369.4,286.7 373.3,287.4 377.2,288.1 381,288.8 384.9,290.1 388.7,285.7 392.6,284.3 396.4,278.2 400.3,274.5 404.2,272 408,270 411.9,268 415.7,268.3 419.6,273.7 423.4,278.1 427.3,281.5 431.2,290 435,306.5 438.9,320.8 442.7,338.4 446.6,348.2 450.4,358.9 454.3,366.7 458.2,374.5 462,379.2 465.9,383.6 469.7,387 473.6,391.9 477.4,392.3 481.3,392.1 485.2,388.8 489,383.2 492.9,377 496.7,373.5 500.6,369.1 504.4,362.4 508.3,356.5 512.2,356.4 516,356.8 519.9,358.1 523.7,361.6 527.6,362.3 531.5,364.7 535.3,366.1 539.2,366.3 543,366.4 546.9,367.1 550.7,367.8 554.6,369.5 558.5,369.7 562.3,368.9 566.2,370.1 570,371.4 573.9,374.1 577.7,374.5 581.6,375.1 585.5,374.4 589.3,373.5 593.2,371.3 597,366.1 600.9,359.6 604.7,355.1 608.6,348.8 612.5,342.5 616.3,337.6 620.2,336.1 624,336.4 627.9,339.5 631.7,342.1 635.6,344.8 639.5,345.9 643.3,348.8 647.2,351.8 651,352.8 654.9,352.4 658.8,350.5 662.6,348.2 666.5,348.6 670.3,349 674.2,348.9 678,349.4 681.9,348.4" fill="none" stroke="#58a283" stroke-width="1.05" stroke-linejoin="round" stroke-linecap="round" />
<polyline points="84,337.4 87.8,331.4 91.7,323.8 95.6,324.1 99.4,320.5 103.3,318.3 107.1,318.9 111,321.5 114.8,324.7 118.7,331.3 122.6,332.3 126.4,328.4 130.3,324.2 134.1,321.3 138,313.9 141.8,305.2 145.7,311.4 149.6,319 153.4,317.1 157.3,323.6 161.1,332.1 165,335.2 168.8,338.1 172.7,338.4 176.6,339.5 180.4,339.9 184.3,340.1 188.1,340 192,339 195.9,335.1 199.7,331.1 203.6,327.6 207.4,321.1 211.3,314 215.1,314.6 219,326 222.9,331.6 226.7,328.7 230.6,334.3 234.4,330.1 238.3,323.8 242.1,325.7 246,324.9 249.9,325 253.7,325 257.6,324.7 261.4,327.2 265.3,326 269.1,324.8 273,320.6 276.9,320.8 280.7,321.7 284.6,321.5 288.4,321.7 292.3,323.8 296.1,315.9 300,304.3 303.9,302.1 307.7,296.3 311.6,308.4 315.4,315.1 319.3,322.3 323.1,327.8 327,331.2 330.9,333.5 334.7,334.4 338.6,328.5 342.4,324.7 346.3,319.4 350.1,314.2 354,305 357.9,304.9 361.7,300.5 365.6,299.8 369.4,299.7 373.3,301.2 377.2,302.6 381,303.9 384.9,306.3 388.7,300.9 392.6,299.9 396.4,292.3 400.3,288.1 404.2,285.1 408,282.8 411.9,280.2 415.7,280.6 419.6,287.7 423.4,293.8 427.3,298.5 431.2,310.2 435,333.2 438.9,352.9 442.7,376.6 446.6,389.3 450.4,402.7 454.3,411.9 458.2,421 462,425.4 465.9,429.8 469.7,432 473.6,436 477.4,433.6 481.3,430.4 485.2,422.7 489,412.1 492.9,401.1 496.7,394.5 500.6,386.4 504.4,375 508.3,365.2 512.2,365.1 516,365.4 519.9,367.2 523.7,371.7 527.6,372.6 531.5,375.6 535.3,377.4 539.2,377.4 543,377.6 546.9,379.1 550.7,381.4 554.6,385.1 558.5,386.3 562.3,385.9 566.2,388.2 570,390.8 573.9,396 577.7,397.8 581.6,399.9 585.5,399.7 589.3,398.8 593.2,396.3 597,389.5 600.9,380.9 604.7,375 608.6,366.3 612.5,357.6 616.3,350.8 620.2,348.7 624,349.2 627.9,353.1 631.7,356.4 635.6,359.8 639.5,361.1 643.3,364.6 647.2,368.1 651,368 654.9,366.3 658.8,362.2 662.6,357.9 666.5,357.9 670.3,357.8 674.2,357 678,357 681.9,355" fill="none" stroke="#58a283" stroke-width="1.05" stroke-linejoin="round" stroke-linecap="round" />
<polyline points="84,302.9 87.8,301.1 91.7,299.4 95.6,297 99.4,294.4 103.3,291.8 107.1,289.3 111,286.5 114.8,283.5 118.7,279.9 122.6,276.6 126.4,273.5 130.3,270.2 134.1,267.1 138,265.2 141.8,263.9 145.7,264.1 149.6,264.3 153.4,263.2 157.3,263.4 161.1,263.6 165,263.3 168.8,263 172.7,261.7 176.6,260.6 180.4,259.2 184.3,257.8 188.1,256.1 192,254.4 195.9,252.4 199.7,251.2 203.6,250.6 207.4,250.1 211.3,249.9 215.1,249.8 219,250.9 222.9,252 226.7,252.1 230.6,252.7 234.4,252.2 238.3,251.4 242.1,251.7 246,251.5 249.9,251 253.7,250.4 257.6,249.5 261.4,247.8 265.3,246.7 269.1,245.4 273,244.3 276.9,243.3 280.7,243.3 284.6,242.9 288.4,242.9 292.3,243.4 296.1,243.8 300,243.9 303.9,243.9 307.7,244.1 311.6,245.2 315.4,246 319.3,247.1 323.1,247.9 327,248.4 330.9,248.8 334.7,249.1 338.6,249.2 342.4,248.9 346.3,249.1 350.1,249.6 354,249.8 357.9,250 361.7,250.3 365.6,250.3 369.4,250.3 373.3,250 377.2,249.7 381,249.3 384.9,248.8 388.7,248.6 392.6,248.1 396.4,247.6 400.3,247 404.2,246.7 408,246.3 411.9,246.3 415.7,246.5 419.6,247.3 423.4,248.1 427.3,249.1 431.2,250.3 435,252.4 438.9,254.6 442.7,257.2 446.6,259.2 450.4,261.4 454.3,263.3 458.2,265.4 462,267.2 465.9,269 469.7,270.9 473.6,273.3 477.4,275.2 481.3,277.2 485.2,279 489,280.3 492.9,281.4 496.7,282.9 500.6,284.3 504.4,285.6 508.3,287 512.2,288.1 516,289.6 519.9,291.4 523.7,293.3 527.6,294.8 531.5,296.5 535.3,298 539.2,299.3 543,300.2 546.9,300.8 550.7,301 554.6,301.1 558.5,301.3 562.3,301.7 566.2,301.8 570,301.8 573.9,301.3 577.7,301.1 581.6,300.8 585.5,300.7 589.3,301.1 593.2,301.4 597,301.7 600.9,302.2 604.7,302.6 608.6,303.3 612.5,303.9 616.3,304.5 620.2,305 624,305.5 627.9,306.3 631.7,307 635.6,307.7 639.5,308.2 643.3,309 647.2,309.9 651,310.9 654.9,311.5 658.8,312.3 662.6,312.9 666.5,313.6 670.3,314.3 674.2,315 678,315.8 681.9,316.3" fill="none" stroke="#158015" stroke-width="2.2" stroke-linejoin="round" stroke-linecap="round" />
<polyline points="84,226.6 87.8,224.2 91.7,221.8 95.6,216.3 99.4,209.5 103.3,201.5 107.1,196.6 111,190.6 114.8,183.4 118.7,172.1 122.6,162.5 126.4,155.5 130.3,149.1 134.1,143.9 138,143.3 141.8,147.7 145.7,157.1 149.6,168.9 153.4,167.4 157.3,171.8 161.1,180.2 165,182 168.8,184.5 172.7,182 176.6,178.7 180.4,175.9 184.3,172.3 188.1,167.1 192,162.2 195.9,157 199.7,154.2 203.6,155.4 207.4,159.6 211.3,164.3 215.1,170.7 219,179.9 222.9,194.7 226.7,199.5 230.6,207 234.4,207 238.3,202.2 242.1,201.7 246,202.9 249.9,202.5 253.7,200.6 257.6,195.9 261.4,187 265.3,180.9 269.1,176.6 273,173.6 276.9,172.6 280.7,174.4 284.6,174.8 288.4,177.9 292.3,183.1 296.1,190.5 300,193.3 303.9,197.1 307.7,200.3 311.6,206.3 315.4,211.9 319.3,219.9 323.1,224.1 327,225.3 330.9,225 334.7,225.6 338.6,225.1 342.4,222.9 346.3,221 350.1,223.3 354,223.2 357.9,225.2 361.7,226.4 365.6,226 369.4,225.7 373.3,224 377.2,221 381,219.2 384.9,216.1 388.7,216.5 392.6,214.6 396.4,213.2 400.3,211.9 404.2,211.5 408,211.8 411.9,212.8 415.7,215.8 419.6,221.2 423.4,227.7 427.3,234 431.2,240.4 435,249.5 438.9,260 442.7,271.5 446.6,278.5 450.4,284.2 454.3,288.3 458.2,293 462,293.6 465.9,295.3 469.7,296.9 473.6,301.1 477.4,303.6 481.3,306.5 485.2,306.2 489,304.7 492.9,303 496.7,302.4 500.6,302.3 504.4,302.8 508.3,303.1 512.2,305.1 516,306.2 519.9,308.8 523.7,313.2 527.6,316.5 531.5,319.4 535.3,320.8 539.2,322.5 543,320.3 546.9,317.8 550.7,312.5 554.6,307.1 558.5,302.1 562.3,300.3 566.2,298 570,294.6 573.9,289 577.7,284.9 581.6,280.9 585.5,278.7 589.3,279 593.2,280.9 597,284 600.9,286.5 604.7,287.9 608.6,290.5 612.5,293.5 616.3,295.7 620.2,297.3 624,299 627.9,301.6 631.7,304.1 635.6,306.7 639.5,307.4 643.3,309.2 647.2,311.2 651,314.8 654.9,316.2 658.8,317.6 662.6,318.2 666.5,319.7 670.3,321.2 674.2,319.8 678,321.6 681.9,321.9" fill="none" stroke="#35085f" stroke-width="2.1" stroke-linejoin="round" stroke-linecap="round" />
<polyline points="84,275.1 87.8,270.9 91.7,269.1 95.6,264.9 99.4,259.1 103.3,252 107.1,246.3 111,241 114.8,235.6 118.7,226.9 122.6,219.5 126.4,214 130.3,209 134.1,203.6 138,206.6 141.8,214.5 145.7,232.8 149.6,248 153.4,257.4 157.3,267.5 161.1,277.5 165,285.1 168.8,289 172.7,287.8 176.6,285 180.4,281.6 184.3,277.9 188.1,273.1 192,266.8 195.9,260.3 199.7,258.9 203.6,261.2 207.4,265.7 211.3,270.6 215.1,274.5 219,285 222.9,292.3 226.7,297.1 230.6,296.1 234.4,294.6 238.3,289.5 242.1,289.3 246,289.5 249.9,288.6 253.7,285.8 257.6,281.2 261.4,274.8 265.3,270.5 269.1,266.5 273,264.9 276.9,261.3 280.7,264.9 284.6,268.3 288.4,272 292.3,277.9 296.1,281.8 300,284 303.9,284.7 307.7,285.7 311.6,291.1 315.4,296.3 319.3,300.3 323.1,304.5 327,304.3 330.9,303.5 334.7,303.3 338.6,300.5 342.4,296.1 346.3,294.6 350.1,294.8 354,294.7 357.9,293.2 361.7,290.6 365.6,289.8 369.4,287 373.3,284.4 377.2,280.5 381,278.4 384.9,275.2 388.7,271.7 392.6,269.2 396.4,265.4 400.3,262.4 404.2,260.5 408,259.9 411.9,260.7 415.7,263 419.6,268.4 423.4,273 427.3,278.4 431.2,284.7 435,297.1 438.9,307.2 442.7,319.8 446.6,329.6 450.4,336.4 454.3,341.6 458.2,346.7 462,350.3 465.9,352.4 469.7,355.5 473.6,361.1 477.4,365.4 481.3,367.6 485.2,369.4 489,369.5 492.9,367.4 496.7,366.3 500.6,367 504.4,367.6 508.3,367 512.2,364.1 516,365.4 519.9,368 523.7,371.1 527.6,373.1 531.5,374.7 535.3,376.2 539.2,375 543,373.1 546.9,369 550.7,363.9 554.6,357.7 558.5,353.3 562.3,350 566.2,346.5 570,343.5 573.9,338.5 577.7,333.5 581.6,329.9 585.5,327.9 589.3,330.4 593.2,332 597,331.7 600.9,333.6 604.7,334.2 608.6,336.8 612.5,339 616.3,340.2 620.2,340.9 624,342.2 627.9,343.3 631.7,344.6 635.6,345.9 639.5,346.3 643.3,347.5 647.2,349.4 651,350.7 654.9,351.6 658.8,352.3 662.6,352.1 666.5,351.6 670.3,353 674.2,355.4 678,356.6 681.9,357.4" fill="none" stroke="#35085f" stroke-width="2.1" stroke-linejoin="round" stroke-linecap="round" />
<polyline points="84,266.9 87.8,264.3 91.7,262 95.6,257.9 99.4,253.5 103.3,248.9 107.1,244.9 111,240.2 114.8,235 118.7,228.3 122.6,222.5 126.4,217.5 130.3,212.2 134.1,207.8 138,206.6 141.8,207.4 145.7,212.3 149.6,217 153.4,217.3 157.3,221.3 161.1,225.3 165,227.3 168.8,229.1 172.7,227.9 176.6,227.2 180.4,225.9 184.3,224.4 188.1,222 192,219.6 195.9,216.5 199.7,215.8 203.6,216.5 207.4,217.9 211.3,219.6 215.1,221.9 219,227 222.9,232 226.7,234.1 230.6,237.1 234.4,236.9 238.3,235.8 242.1,237.8 246,238.4 249.9,237.9 253.7,237.1 257.6,235.3 261.4,231.6 265.3,229.5 269.1,227.2 273,225.4 276.9,223.8 280.7,225.5 284.6,225.5 288.4,226.8 292.3,229.5 296.1,231.7 300,232.9 303.9,234 307.7,235.3 311.6,239.2 315.4,241.9 319.3,245.5 323.1,248 327,249.4 330.9,250.4 334.7,251.3 338.6,251.4 342.4,250.3 346.3,250.9 350.1,252.2 354,252.3 357.9,253 361.7,253.6 365.6,253.2 369.4,253.1 373.3,252 377.2,250.8 381,249.8 384.9,248.3 388.7,247.7 392.6,246.2 396.4,244.9 400.3,243.4 404.2,242.7 408,242 411.9,242.2 415.7,243.2 419.6,245.7 423.4,248.3 427.3,251 431.2,254.6 435,260.4 438.9,266.1 442.7,272.8 446.6,277.4 450.4,282.4 454.3,286.5 458.2,290.9 462,294.1 465.9,297.3 469.7,300.7 473.6,305.2 477.4,308.5 481.3,311.6 485.2,314.4 489,315.3 492.9,316 496.7,317.6 500.6,319.1 504.4,320.3 508.3,321.5 512.2,322.4 516,323.9 519.9,326.6 523.7,329.3 527.6,330.9 531.5,333.1 535.3,334.9 539.2,335.8 543,335.5 546.9,334.7 550.7,332.6 554.6,330.5 558.5,328.8 562.3,327.8 566.2,326.1 570,324.2 573.9,321.1 577.7,319 581.6,316.6 585.5,315.2 589.3,315.1 593.2,315 597,315 600.9,315.2 604.7,315.3 608.6,316.4 612.5,317.4 616.3,317.9 620.2,318.3 624,319 627.9,320.1 631.7,321.1 635.6,322.2 639.5,322.6 643.3,323.8 647.2,325.3 651,326.9 654.9,327.6 658.8,328.6 662.6,329 666.5,329.7 670.3,330.6 674.2,331.4 678,332.4 681.9,332.8" fill="none" stroke="#ea1616" stroke-width="2.15" stroke-linejoin="round" stroke-linecap="round" />
<polyline points="84,250.9 87.8,247.6 91.7,245.3 95.6,238.7 99.4,231.7 103.3,224.9 107.1,219.6 111,213.3 114.8,205.8 118.7,195.2 122.6,187.7 126.4,182.1 130.3,176 134.1,172.1 138,175.9 141.8,183.2 145.7,199.3 149.6,212.8 153.4,214.3 157.3,224.1 161.1,233.2 165,236.4 168.8,239.1 172.7,234.5 176.6,231.6 180.4,227.6 184.3,223.8 188.1,218.3 192,213.3 195.9,207.1 199.7,207 203.6,210.4 207.4,214.9 211.3,219.4 215.1,224.7 219,236.4 222.9,246.5 226.7,248.7 230.6,253.2 234.4,249.9 238.3,244.9 242.1,247.9 246,247.4 249.9,244.7 253.7,241.7 257.6,236.5 261.4,227.6 265.3,223.3 269.1,219 273,216.2 276.9,214.2 280.7,219.8 284.6,220.9 288.4,224.8 292.3,231.7 296.1,236.3 300,238.4 303.9,239.9 307.7,241.9 311.6,250 315.4,254.4 319.3,260.7 323.1,263.8 327,264.3 330.9,263.9 334.7,263.4 338.6,261.5 342.4,257.1 346.3,257.3 350.1,259.3 354,258.3 357.9,258.8 361.7,259 365.6,257.1 369.4,256.1 373.3,253.1 377.2,250.1 381,247.7 384.9,244.5 388.7,243.9 392.6,241 396.4,238.9 400.3,236.5 404.2,236.2 408,235.5 411.9,237.2 415.7,240.5 419.6,246.9 423.4,252.9 427.3,258.4 431.2,265.5 435,277.3 438.9,287.6 442.7,299.5 446.6,305.6 450.4,312.3 454.3,316.7 458.2,321.4 462,323.6 465.9,325.7 469.7,328.6 473.6,334.3 477.4,336.7 481.3,338.9 485.2,340.5 489,338 492.9,335.4 496.7,335.6 500.6,336 504.4,335.8 508.3,335.8 512.2,335.2 516,336.6 519.9,340.6 523.7,344.5 527.6,345.5 531.5,348 535.3,349.5 539.2,349 543,345.9 546.9,342.1 550.7,335.9 554.6,330.3 558.5,326.4 562.3,324.5 566.2,321 570,317.4 573.9,311.4 577.7,308.1 581.6,304.5 585.5,303.3 589.3,305.3 593.2,306.9 597,308.2 600.9,309.9 604.7,311.3 608.6,314.6 612.5,317.2 616.3,318.3 620.2,319.3 624,320.7 627.9,323 631.7,324.9 635.6,326.8 639.5,326.8 643.3,329 647.2,331.5 651,334.1 654.9,334.5 658.8,335.7 662.6,335.3 666.5,335.9 670.3,336.8 674.2,337.7 678,338.8 681.9,338.6" fill="none" stroke="#1212d8" stroke-width="1.6" stroke-linejoin="round" stroke-linecap="round" />
</g>
<path d="M88 138.9H840" stroke="#040486" stroke-width="2.2"/>
<path d="M88 222.8H840" stroke="#0404be" stroke-width="2.3"/>
<path d="M88 279.7H840" stroke="#040486" stroke-width="2.3"/>
<polyline points="399.7,223.3 524.2,369 577.8,279" fill="none" stroke="#8e8e8e" stroke-width="3.9" stroke-linejoin="miter" clip-path="url(#cm)"/>
<path d="M88 309.1H840" stroke="#04046a" stroke-width="1.9"/>
<path d="M88 311.4H840" stroke="#e606e6" stroke-width="2.6"/>
<path d="M88 315.3H840" stroke="#e27444" stroke-width="2.0"/>
<path d="M88 319H840" stroke="#0606d8" stroke-width="2.0"/>
<path d="M88 322H840" stroke="#060684" stroke-width="2.0"/>
<path d="M88 332.7H840" stroke="#045004" stroke-width="2.0"/>
<path d="M88 336.4H840" stroke="#046004" stroke-width="2.0"/>
<path d="M88 341.3H840" stroke="#ac24ac" stroke-width="2.1"/>
<path d="M88 354H840" stroke="#e606e6" stroke-width="2.4"/>
<path d="M88 356.8H840" stroke="#9c0404" stroke-width="2.0"/>
<path d="M88 362.6H840" stroke="#9c0404" stroke-width="2.1"/>
<path d="M88 369.1H840" stroke="#d40404" stroke-width="2.2"/>
<path d="M88 400H840" stroke="#d40404" stroke-width="2.3"/>
<path d="M88 442.3H840" stroke="#dc0808" stroke-width="2.2"/>
<path d="M88 455H840" stroke="#c00c0c" stroke-width="2.2"/>
<rect x="86.6" y="332" width="5.8" height="6" fill="#127212"/>
<rect x="86.6" y="338" width="5.8" height="5.7" fill="#c81ec8"/>
<rect x="88.7" y="335.9" width="1.5" height="1.4" fill="#fff"/>
<rect x="88.7" y="340.3" width="1.5" height="1.4" fill="#fff"/>
<rect x="832.2" y="332" width="5.8" height="6" fill="#127212"/>
<rect x="832.2" y="338" width="5.8" height="5.7" fill="#c81ec8"/>
<rect x="834.3" y="335.9" width="1.5" height="1.4" fill="#fff"/>
<rect x="834.3" y="340.3" width="1.5" height="1.4" fill="#fff"/>
<path d="M579.6 278.2L682.6 359.6" stroke="#c21a2a" stroke-width="1.6" clip-path="url(#cm)"/>
<path d="M577.8 279L775 440.8" stroke="#7d8790" stroke-width="2.7" clip-path="url(#cm)"/>
<text x="92" y="482.5" font-size="9.5" fill="#222" stroke="#222" stroke-width="0.18" textLength="147" lengthAdjust="spacingAndGlyphs">MACD(12,26,9) -0.012987 -0.013787</text>
<g clip-path="url(#cmacd)">
<path d="M87.8 501.9V489.6" stroke="#20207e" stroke-width="1.15"/>
<path d="M91.7 501.9V489.5" stroke="#20207e" stroke-width="1.15"/>
<path d="M95.6 501.9V487.8" stroke="#20207e" stroke-width="1.15"/>
<path d="M99.4 501.9V486.1" stroke="#20207e" stroke-width="1.15"/>
<path d="M103.3 501.9V484.5" stroke="#20207e" stroke-width="1.15"/>
<path d="M107.1 501.9V483.6" stroke="#20207e" stroke-width="1.15"/>
<path d="M111 501.9V482.4" stroke="#20207e" stroke-width="1.15"/>
<path d="M114.8 501.9V480.8" stroke="#20207e" stroke-width="1.15"/>
<path d="M118.7 501.9V478.1" stroke="#20207e" stroke-width="1.15"/>
<path d="M122.6 501.9V476.7" stroke="#20207e" stroke-width="1.15"/>
<path d="M126.4 501.9V476.1" stroke="#20207e" stroke-width="1.15"/>
<path d="M130.3 501.9V475.4" stroke="#20207e" stroke-width="1.15"/>
<path d="M134.1 501.9V475.6" stroke="#20207e" stroke-width="1.15"/>
<path d="M138 501.9V478.5" stroke="#20207e" stroke-width="1.15"/>
<path d="M141.8 501.9V482.6" stroke="#20207e" stroke-width="1.15"/>
<path d="M145.7 501.9V489.8" stroke="#20207e" stroke-width="1.15"/>
<path d="M149.6 501.9V495.6" stroke="#20207e" stroke-width="1.15"/>
<path d="M153.4 501.9V496.8" stroke="#20207e" stroke-width="1.15"/>
<path d="M157.3 501.9V500.9" stroke="#20207e" stroke-width="1.15"/>
<path d="M161.1 501.9V504.5" stroke="#20207e" stroke-width="1.15"/>
<path d="M165 501.9V505.7" stroke="#20207e" stroke-width="1.15"/>
<path d="M168.8 501.9V506.7" stroke="#20207e" stroke-width="1.15"/>
<path d="M172.7 501.9V504.9" stroke="#20207e" stroke-width="1.15"/>
<path d="M176.6 501.9V503.8" stroke="#20207e" stroke-width="1.15"/>
<rect x="179.9" y="501.3" width="1" height="1.2" fill="#2e2e86"/>
<path d="M184.3 501.9V501" stroke="#20207e" stroke-width="1.15"/>
<path d="M188.1 501.9V499.1" stroke="#20207e" stroke-width="1.15"/>
<path d="M192 501.9V497.4" stroke="#20207e" stroke-width="1.15"/>
<path d="M195.9 501.9V495.4" stroke="#20207e" stroke-width="1.15"/>
<path d="M199.7 501.9V495.7" stroke="#20207e" stroke-width="1.15"/>
<path d="M203.6 501.9V497.3" stroke="#20207e" stroke-width="1.15"/>
<path d="M207.4 501.9V499.2" stroke="#20207e" stroke-width="1.15"/>
<path d="M211.3 501.9V501" stroke="#20207e" stroke-width="1.15"/>
<path d="M215.1 501.9V503.1" stroke="#20207e" stroke-width="1.15"/>
<path d="M219 501.9V507.3" stroke="#20207e" stroke-width="1.15"/>
<path d="M222.9 501.9V510.8" stroke="#20207e" stroke-width="1.15"/>
<path d="M226.7 501.9V511.2" stroke="#20207e" stroke-width="1.15"/>
<path d="M230.6 501.9V512.4" stroke="#20207e" stroke-width="1.15"/>
<path d="M234.4 501.9V510.7" stroke="#20207e" stroke-width="1.15"/>
<path d="M238.3 501.9V508.4" stroke="#20207e" stroke-width="1.15"/>
<path d="M242.1 501.9V509.1" stroke="#20207e" stroke-width="1.15"/>
<path d="M246 501.9V508.5" stroke="#20207e" stroke-width="1.15"/>
<path d="M249.9 501.9V507.1" stroke="#20207e" stroke-width="1.15"/>
<path d="M253.7 501.9V505.7" stroke="#20207e" stroke-width="1.15"/>
<path d="M257.6 501.9V503.5" stroke="#20207e" stroke-width="1.15"/>
<path d="M261.4 501.9V500.1" stroke="#20207e" stroke-width="1.15"/>
<path d="M265.3 501.9V498.5" stroke="#20207e" stroke-width="1.15"/>
<path d="M269.1 501.9V497.1" stroke="#20207e" stroke-width="1.15"/>
<path d="M273 501.9V496.3" stroke="#20207e" stroke-width="1.15"/>
<path d="M276.9 501.9V495.8" stroke="#20207e" stroke-width="1.15"/>
<path d="M280.7 501.9V498.1" stroke="#20207e" stroke-width="1.15"/>
<path d="M284.6 501.9V498.7" stroke="#20207e" stroke-width="1.15"/>
<path d="M288.4 501.9V500.3" stroke="#20207e" stroke-width="1.15"/>
<path d="M292.3 501.9V502.9" stroke="#20207e" stroke-width="1.15"/>
<path d="M296.1 501.9V504.6" stroke="#20207e" stroke-width="1.15"/>
<path d="M300 501.9V505.2" stroke="#20207e" stroke-width="1.15"/>
<path d="M303.9 501.9V505.6" stroke="#20207e" stroke-width="1.15"/>
<path d="M307.7 501.9V506.2" stroke="#20207e" stroke-width="1.15"/>
<path d="M311.6 501.9V508.9" stroke="#20207e" stroke-width="1.15"/>
<path d="M315.4 501.9V510.2" stroke="#20207e" stroke-width="1.15"/>
<path d="M319.3 501.9V512.1" stroke="#20207e" stroke-width="1.15"/>
<path d="M323.1 501.9V512.7" stroke="#20207e" stroke-width="1.15"/>
<path d="M327 501.9V512.3" stroke="#20207e" stroke-width="1.15"/>
<path d="M330.9 501.9V511.6" stroke="#20207e" stroke-width="1.15"/>
<path d="M334.7 501.9V510.8" stroke="#20207e" stroke-width="1.15"/>
<path d="M338.6 501.9V509.6" stroke="#20207e" stroke-width="1.15"/>
<path d="M342.4 501.9V507.5" stroke="#20207e" stroke-width="1.15"/>
<path d="M346.3 501.9V507.2" stroke="#20207e" stroke-width="1.15"/>
<path d="M350.1 501.9V507.6" stroke="#20207e" stroke-width="1.15"/>
<path d="M354 501.9V506.8" stroke="#20207e" stroke-width="1.15"/>
<path d="M357.9 501.9V506.7" stroke="#20207e" stroke-width="1.15"/>
<path d="M361.7 501.9V506.4" stroke="#20207e" stroke-width="1.15"/>
<path d="M365.6 501.9V505.4" stroke="#20207e" stroke-width="1.15"/>
<path d="M369.4 501.9V504.8" stroke="#20207e" stroke-width="1.15"/>
<path d="M373.3 501.9V503.5" stroke="#20207e" stroke-width="1.15"/>
<rect x="376.7" y="501.3" width="1" height="1.2" fill="#2e2e86"/>
<rect x="380.5" y="501.3" width="1" height="1.2" fill="#2e2e86"/>
<path d="M384.9 501.9V500.1" stroke="#20207e" stroke-width="1.15"/>
<path d="M388.7 501.9V499.9" stroke="#20207e" stroke-width="1.15"/>
<path d="M392.6 501.9V498.9" stroke="#20207e" stroke-width="1.15"/>
<path d="M396.4 501.9V498.3" stroke="#20207e" stroke-width="1.15"/>
<path d="M400.3 501.9V497.5" stroke="#20207e" stroke-width="1.15"/>
<path d="M404.2 501.9V497.6" stroke="#20207e" stroke-width="1.15"/>
<path d="M408 501.9V497.6" stroke="#20207e" stroke-width="1.15"/>
<path d="M411.9 501.9V498.4" stroke="#20207e" stroke-width="1.15"/>
<path d="M415.7 501.9V499.8" stroke="#20207e" stroke-width="1.15"/>
<rect x="419.1" y="501.3" width="1" height="1.2" fill="#2e2e86"/>
<path d="M423.4 501.9V504.5" stroke="#20207e" stroke-width="1.15"/>
<path d="M427.3 501.9V506.4" stroke="#20207e" stroke-width="1.15"/>
<path d="M431.2 501.9V508.8" stroke="#20207e" stroke-width="1.15"/>
<path d="M435 501.9V512.8" stroke="#20207e" stroke-width="1.15"/>
<path d="M438.9 501.9V516" stroke="#20207e" stroke-width="1.15"/>
<path d="M442.7 501.9V519.7" stroke="#20207e" stroke-width="1.15"/>
<path d="M446.6 501.9V521" stroke="#20207e" stroke-width="1.15"/>
<path d="M450.4 501.9V522.4" stroke="#20207e" stroke-width="1.15"/>
<path d="M454.3 501.9V522.9" stroke="#20207e" stroke-width="1.15"/>
<path d="M458.2 501.9V523.5" stroke="#20207e" stroke-width="1.15"/>
<path d="M462 501.9V523.1" stroke="#20207e" stroke-width="1.15"/>
<path d="M465.9 501.9V522.6" stroke="#20207e" stroke-width="1.15"/>
<path d="M469.7 501.9V522.5" stroke="#20207e" stroke-width="1.15"/>
<path d="M473.6 501.9V523.3" stroke="#20207e" stroke-width="1.15"/>
<path d="M477.4 501.9V522.9" stroke="#20207e" stroke-width="1.15"/>
<path d="M481.3 501.9V522.5" stroke="#20207e" stroke-width="1.15"/>
<path d="M485.2 501.9V521.8" stroke="#20207e" stroke-width="1.15"/>
<path d="M489 501.9V519.6" stroke="#20207e" stroke-width="1.15"/>
<path d="M492.9 501.9V517.5" stroke="#20207e" stroke-width="1.15"/>
<path d="M496.7 501.9V516.6" stroke="#20207e" stroke-width="1.15"/>
<path d="M500.6 501.9V515.7" stroke="#20207e" stroke-width="1.15"/>
<path d="M504.4 501.9V514.7" stroke="#20207e" stroke-width="1.15"/>
<path d="M508.3 501.9V513.9" stroke="#20207e" stroke-width="1.15"/>
<path d="M512.2 501.9V512.8" stroke="#20207e" stroke-width="1.15"/>
<path d="M516 501.9V512.6" stroke="#20207e" stroke-width="1.15"/>
<path d="M519.9 501.9V513.3" stroke="#20207e" stroke-width="1.15"/>
<path d="M523.7 501.9V513.9" stroke="#20207e" stroke-width="1.15"/>
<path d="M527.6 501.9V513.6" stroke="#20207e" stroke-width="1.15"/>
<path d="M531.5 501.9V513.7" stroke="#20207e" stroke-width="1.15"/>
<path d="M535.3 501.9V513.5" stroke="#20207e" stroke-width="1.15"/>
<path d="M539.2 501.9V512.6" stroke="#20207e" stroke-width="1.15"/>
<path d="M543 501.9V510.7" stroke="#20207e" stroke-width="1.15"/>
<path d="M546.9 501.9V508.7" stroke="#20207e" stroke-width="1.15"/>
<path d="M550.7 501.9V506" stroke="#20207e" stroke-width="1.15"/>
<path d="M554.6 501.9V503.6" stroke="#20207e" stroke-width="1.15"/>
<rect x="558" y="501.3" width="1" height="1.2" fill="#2e2e86"/>
<path d="M562.3 501.9V501.1" stroke="#20207e" stroke-width="1.15"/>
<path d="M566.2 501.9V499.7" stroke="#20207e" stroke-width="1.15"/>
<path d="M570 501.9V498.4" stroke="#20207e" stroke-width="1.15"/>
<path d="M573.9 501.9V496.4" stroke="#20207e" stroke-width="1.15"/>
<path d="M577.7 501.9V495.4" stroke="#20207e" stroke-width="1.15"/>
<path d="M581.6 501.9V494.3" stroke="#20207e" stroke-width="1.15"/>
<path d="M585.5 501.9V494.3" stroke="#20207e" stroke-width="1.15"/>
<path d="M589.3 501.9V495.3" stroke="#20207e" stroke-width="1.15"/>
<path d="M593.2 501.9V496.3" stroke="#20207e" stroke-width="1.15"/>
<path d="M597 501.9V497.1" stroke="#20207e" stroke-width="1.15"/>
<path d="M600.9 501.9V498" stroke="#20207e" stroke-width="1.15"/>
<path d="M604.7 501.9V498.7" stroke="#20207e" stroke-width="1.15"/>
<path d="M608.6 501.9V500.1" stroke="#20207e" stroke-width="1.15"/>
<rect x="612" y="501.3" width="1" height="1.2" fill="#2e2e86"/>
<rect x="615.8" y="501.3" width="1" height="1.2" fill="#2e2e86"/>
<rect x="619.7" y="501.3" width="1" height="1.2" fill="#2e2e86"/>
<path d="M624 501.9V502.7" stroke="#20207e" stroke-width="1.15"/>
<path d="M627.9 501.9V503.5" stroke="#20207e" stroke-width="1.15"/>
<path d="M631.7 501.9V504.2" stroke="#20207e" stroke-width="1.15"/>
<path d="M635.6 501.9V504.8" stroke="#20207e" stroke-width="1.15"/>
<path d="M639.5 501.9V504.6" stroke="#20207e" stroke-width="1.15"/>
<path d="M643.3 501.9V505.3" stroke="#20207e" stroke-width="1.15"/>
<path d="M647.2 501.9V506" stroke="#20207e" stroke-width="1.15"/>
<path d="M651 501.9V506.8" stroke="#20207e" stroke-width="1.15"/>
<path d="M654.9 501.9V506.7" stroke="#20207e" stroke-width="1.15"/>
<path d="M658.8 501.9V506.9" stroke="#20207e" stroke-width="1.15"/>
<path d="M662.6 501.9V506.5" stroke="#20207e" stroke-width="1.15"/>
<path d="M666.5 501.9V506.4" stroke="#20207e" stroke-width="1.15"/>
<path d="M670.3 501.9V506.5" stroke="#20207e" stroke-width="1.15"/>
<path d="M674.2 501.9V506.5" stroke="#20207e" stroke-width="1.15"/>
<path d="M678 501.9V506.6" stroke="#20207e" stroke-width="1.15"/>
<path d="M681.9 501.9V506.3" stroke="#20207e" stroke-width="1.15"/>
<polyline points="84,492.3 87.8,491.6 91.7,491.2 95.6,490.6 99.4,489.8 103.3,488.9 107.1,488 111,487.1 114.8,486 118.7,484.7 122.6,483.3 126.4,481.8 130.3,480.4 134.1,479.2 138,478.6 141.8,478.5 145.7,479.3 149.6,480.9 153.4,483 157.3,485.7 161.1,488.8 165,492.2 168.8,495.7 172.7,498.6 176.6,501 180.4,502.4 184.3,503 188.1,503.2 192,502.8 195.9,501.8 199.7,500.7 203.6,499.7 207.4,499 211.3,498.7 215.1,498.8 219,499.5 222.9,500.8 226.7,502.3 230.6,504.2 234.4,505.9 238.3,507.1 242.1,508.2 246,509 249.9,509.5 253.7,509.3 257.6,508.5 261.4,507.3 265.3,505.7 269.1,504.2 273,502.9 276.9,501.4 280.7,500.2 284.6,499.3 288.4,498.7 292.3,498.6 296.1,499.1 300,499.9 303.9,500.8 307.7,501.9 311.6,503.4 315.4,504.7 319.3,506.2 323.1,507.6 327,508.7 330.9,509.4 334.7,510 338.6,510.5 342.4,510.6 346.3,510.4 350.1,510.1 354,509.6 357.9,508.9 361.7,508.2 365.6,507.6 369.4,506.9 373.3,506.2 377.2,505.6 381,505 384.9,504.1 388.7,503.4 392.6,502.5 396.4,501.6 400.3,500.7 404.2,499.9 408,499.3 411.9,498.8 415.7,498.7 419.6,498.9 423.4,499.4 427.3,500.3 431.2,501.5 435,503.1 438.9,505.2 442.7,507.6 446.6,510.2 450.4,512.7 454.3,514.9 458.2,517.1 462,518.9 465.9,520.4 469.7,521.5 473.6,522.3 477.4,522.7 481.3,522.8 485.2,522.8 489,522.4 492.9,521.7 496.7,521 500.6,520.3 504.4,519.4 508.3,518.4 512.2,517.2 516,516.1 519.9,515.2 523.7,514.6 527.6,514.1 531.5,513.8 535.3,513.6 539.2,513.3 543,513 546.9,512.5 550.7,511.8 554.6,510.7 558.5,509.4 562.3,508 566.2,506.4 570,504.7 573.9,502.9 577.7,501.2 581.6,499.6 585.5,498.3 589.3,497.4 593.2,496.8 597,496.4 600.9,496.2 604.7,496.2 608.6,496.6 612.5,497.3 616.3,498.1 620.2,499 624,499.8 627.9,500.6 631.7,501.4 635.6,502.1 639.5,502.8 643.3,503.4 647.2,503.9 651,504.5 654.9,505 658.8,505.4 662.6,505.7 666.5,506 670.3,506.2 674.2,506.4 678,506.5 681.9,506.6" fill="none" stroke="#c21c2c" stroke-width="1.05" stroke-linejoin="round" stroke-linecap="round" />
</g>
<rect x="394.9" y="32" width="3.2" height="508" fill="#e20404"/>
<rect x="87" y="31" width="752" height="1.2" fill="#000"/>
<rect x="86.7" y="31" width="1.4" height="509" fill="#1a1a1a"/>
<rect x="838" y="31" width="1.1" height="509" fill="#000"/>
<rect x="86.6" y="468" width="752.4" height="4" fill="#9c9c9c"/>
<rect x="87" y="468" width="752" height="1.1" fill="#5c5c5c"/>
<rect x="87" y="471" width="752" height="1.1" fill="#4a4a4a"/>
<rect x="86.6" y="525.7" width="752.4" height="4" fill="#9c9c9c"/>
<rect x="87" y="525.7" width="752" height="1.1" fill="#5c5c5c"/>
<rect x="87" y="528.7" width="752" height="1.1" fill="#4a4a4a"/>
<rect x="394.9" y="469" width="3.2" height="2" fill="#8e7b7b"/>
<rect x="394.9" y="526.7" width="3.2" height="2" fill="#8e7b7b"/>
<path d="M682.8 33h6.6l-3.3 3.1z" fill="#bdbdbd"/>
<g stroke="#000" stroke-width="1">
<path d="M839 52.3h2.2"/>
<path d="M839 84.2h2.2"/>
<path d="M839 116h2.2"/>
<path d="M839 147.9h2.2"/>
<path d="M839 179.7h2.2"/>
<path d="M839 211.6h2.2"/>
<path d="M839 243.5h2.2"/>
<path d="M839 275.3h2.2"/>
<path d="M839 307.2h2.2"/>
<path d="M839 339h2.2"/>
<path d="M839 370.9h2.2"/>
<path d="M839 402.8h2.2"/>
<path d="M839 434.6h2.2"/>
<path d="M839 466.5h2.2"/>
<path d="M839 502.5h2.2"/>
</g>
<text x="844" y="55.8" font-size="9.4" fill="#0a0a0a" stroke="#0a0a0a" stroke-width="0.2" textLength="31.3" lengthAdjust="spacingAndGlyphs">1.81335</text>
<text x="844" y="87.7" font-size="9.4" fill="#0a0a0a" stroke="#0a0a0a" stroke-width="0.2" textLength="31.3" lengthAdjust="spacingAndGlyphs">1.73345</text>
<text x="844" y="119.5" font-size="9.4" fill="#0a0a0a" stroke="#0a0a0a" stroke-width="0.2" textLength="31.3" lengthAdjust="spacingAndGlyphs">1.65590</text>
<text x="844" y="151.4" font-size="9.4" fill="#0a0a0a" stroke="#0a0a0a" stroke-width="0.2" textLength="31.3" lengthAdjust="spacingAndGlyphs">1.57835</text>
<text x="844" y="183.2" font-size="9.4" fill="#0a0a0a" stroke="#0a0a0a" stroke-width="0.2" textLength="31.3" lengthAdjust="spacingAndGlyphs">1.50080</text>
<text x="844" y="215.1" font-size="9.4" fill="#0a0a0a" stroke="#0a0a0a" stroke-width="0.2" textLength="31.3" lengthAdjust="spacingAndGlyphs">1.42090</text>
<text x="844" y="247" font-size="9.4" fill="#0a0a0a" stroke="#0a0a0a" stroke-width="0.2" textLength="31.3" lengthAdjust="spacingAndGlyphs">1.34335</text>
<text x="844" y="278.8" font-size="9.4" fill="#0a0a0a" stroke="#0a0a0a" stroke-width="0.2" textLength="31.3" lengthAdjust="spacingAndGlyphs">1.26580</text>
<text x="844" y="310.7" font-size="9.4" fill="#0a0a0a" stroke="#0a0a0a" stroke-width="0.2" textLength="31.3" lengthAdjust="spacingAndGlyphs">1.18825</text>
<text x="844" y="342.5" font-size="9.4" fill="#0a0a0a" stroke="#0a0a0a" stroke-width="0.2" textLength="31.3" lengthAdjust="spacingAndGlyphs">1.11070</text>
<text x="844" y="374.4" font-size="9.4" fill="#0a0a0a" stroke="#0a0a0a" stroke-width="0.2" textLength="31.3" lengthAdjust="spacingAndGlyphs">1.03315</text>
<text x="844" y="406.3" font-size="9.4" fill="#0a0a0a" stroke="#0a0a0a" stroke-width="0.2" textLength="31.3" lengthAdjust="spacingAndGlyphs">0.95560</text>
<text x="844" y="438.1" font-size="9.4" fill="#0a0a0a" stroke="#0a0a0a" stroke-width="0.2" textLength="31.3" lengthAdjust="spacingAndGlyphs">0.87570</text>
<text x="844" y="470" font-size="9.4" fill="#0a0a0a" stroke="#0a0a0a" stroke-width="0.2" textLength="31.3" lengthAdjust="spacingAndGlyphs">0.79815</text>
<text x="842" y="481.1" font-size="9.4" fill="#0a0a0a" stroke="#0a0a0a" stroke-width="0.2" textLength="36.1" lengthAdjust="spacingAndGlyphs">0.085434</text>
<text x="842" y="505.3" font-size="9.4" fill="#0a0a0a" stroke="#0a0a0a" stroke-width="0.2" textLength="16.9" lengthAdjust="spacingAndGlyphs">0.00</text>
<text x="842" y="523.4" font-size="9.4" fill="#0a0a0a" stroke="#0a0a0a" stroke-width="0.2" textLength="39" lengthAdjust="spacingAndGlyphs">-0.070937</text>
<text x="842" y="538.9" font-size="9.4" fill="#0a0a0a" stroke="#0a0a0a" stroke-width="0.2" textLength="14.4" lengthAdjust="spacingAndGlyphs">100</text>
<rect x="840" y="133" width="39" height="10.4" fill="#0c0ce6"/>
<text x="844" y="141.5" font-size="9.4" fill="#fff" stroke="#fff" stroke-width="0.25" textLength="31.6" lengthAdjust="spacingAndGlyphs">1.59904</text>
<rect x="840" y="217.3" width="39" height="10.5" fill="#0c0ce6"/>
<text x="844" y="225.6" font-size="9.4" fill="#fff" stroke="#fff" stroke-width="0.25" textLength="31.6" lengthAdjust="spacingAndGlyphs">1.39447</text>
<rect x="840" y="274.2" width="39" height="10.3" fill="#0c0ce6"/>
<text x="844" y="282.5" font-size="9.4" fill="#fff" stroke="#fff" stroke-width="0.25" textLength="31.6" lengthAdjust="spacingAndGlyphs">1.25382</text>
<rect x="840" y="317" width="39" height="9.7" fill="#10108c"/>
<rect x="840" y="316" width="39" height="9" fill="#0c0ce6"/>
<text x="844" y="324.8" font-size="9.4" fill="#fff" stroke="#fff" stroke-width="0.25" textLength="31.6" lengthAdjust="spacingAndGlyphs">1.14945</text>
<rect x="840" y="311" width="39" height="9" fill="#ef7b4e"/>
<rect x="840" y="304" width="39" height="9.7" fill="#0c0c70"/>
<rect x="840" y="305.2" width="39" height="10.8" fill="#f012ea"/>
<text x="844" y="314.1" font-size="9.4" fill="#fff" stroke="#fff" stroke-width="0.25" textLength="31.6" lengthAdjust="spacingAndGlyphs">1.17638</text>
<rect x="840" y="327.4" width="39" height="9.1" fill="#146414"/>
<text x="844" y="334.9" font-size="9.4" fill="#fff" stroke="#fff" stroke-width="0.25" textLength="31.6" lengthAdjust="spacingAndGlyphs">1.12346</text>
<rect x="840" y="335.6" width="39" height="9.6" fill="#f012ea"/>
<text x="844" y="344.1" font-size="9.4" fill="#fff" stroke="#fff" stroke-width="0.25" textLength="31.6" lengthAdjust="spacingAndGlyphs">1.10197</text>
<rect x="840" y="364.1" width="39" height="10.1" fill="#ee0c0c"/>
<text x="844" y="371.9" font-size="9.4" fill="#fff" stroke="#fff" stroke-width="0.25" textLength="31.6" lengthAdjust="spacingAndGlyphs">1.03369</text>
<rect x="840" y="357.5" width="39" height="9.6" fill="#ee0c0c"/>
<text x="844" y="365.3" font-size="9.4" fill="#fff" stroke="#fff" stroke-width="0.25" textLength="31.6" lengthAdjust="spacingAndGlyphs">1.04960</text>
<rect x="840" y="351.5" width="39" height="9.6" fill="#ee0c0c"/>
<rect x="840" y="348" width="39" height="10.7" fill="#f012ea"/>
<text x="844" y="356.6" font-size="9.4" fill="#fff" stroke="#fff" stroke-width="0.25" textLength="31.6" lengthAdjust="spacingAndGlyphs">1.07254</text>
<rect x="840" y="394.8" width="39" height="9.4" fill="#ee0c0c"/>
<text x="844" y="402.9" font-size="9.4" fill="#fff" stroke="#fff" stroke-width="0.25" textLength="31.6" lengthAdjust="spacingAndGlyphs">0.95842</text>
<rect x="840" y="437" width="39" height="9.8" fill="#ee0c0c"/>
<text x="844" y="445.1" font-size="9.4" fill="#fff" stroke="#fff" stroke-width="0.25" textLength="31.6" lengthAdjust="spacingAndGlyphs">0.85427</text>
<rect x="840" y="450" width="39" height="9.4" fill="#ee0c0c"/>
<text x="844" y="458" font-size="9.4" fill="#fff" stroke="#fff" stroke-width="0.25" textLength="31.6" lengthAdjust="spacingAndGlyphs">0.82202</text>
<path d="M845 317.6H875" stroke="#fff" stroke-width="0.9" stroke-dasharray="2.2 2.2" opacity="0.8"/>
<path d="M845 359.6H875" stroke="#fff" stroke-width="0.8" stroke-dasharray="2.2 2.2" opacity="0.7"/>
<path d="M90.4 37.5h6.8l-3.4 3.9z" fill="#000"/>
<text x="102.4" y="42.6" font-size="9.5" fill="#0a0a0a" stroke="#0a0a0a" stroke-width="0.18" textLength="72" lengthAdjust="spacingAndGlyphs">EURUSD,Monthly</text>
<text x="181.2" y="42.6" font-size="9.5" fill="#0a0a0a" stroke="#0a0a0a" stroke-width="0.18" textLength="135" lengthAdjust="spacingAndGlyphs">1.09500 1.11449 1.07600 1.11033</text>
<text x="92" y="540.7" font-size="9.5" fill="#0a0a0a" stroke="#0a0a0a" stroke-width="0.18" textLength="64.2" lengthAdjust="spacingAndGlyphs">RSI(30) 45.7836</text>
<rect x="882.8" y="27" width="2.2" height="513" fill="#c3d8ef"/>
<rect x="885" y="0" width="75" height="540" fill="#000"/>
<circle cx="767.5" cy="454.6" r="38.2" fill="#ffff00" opacity="0.5" filter="url(#soft)"/>
</svg>
</body></html>
